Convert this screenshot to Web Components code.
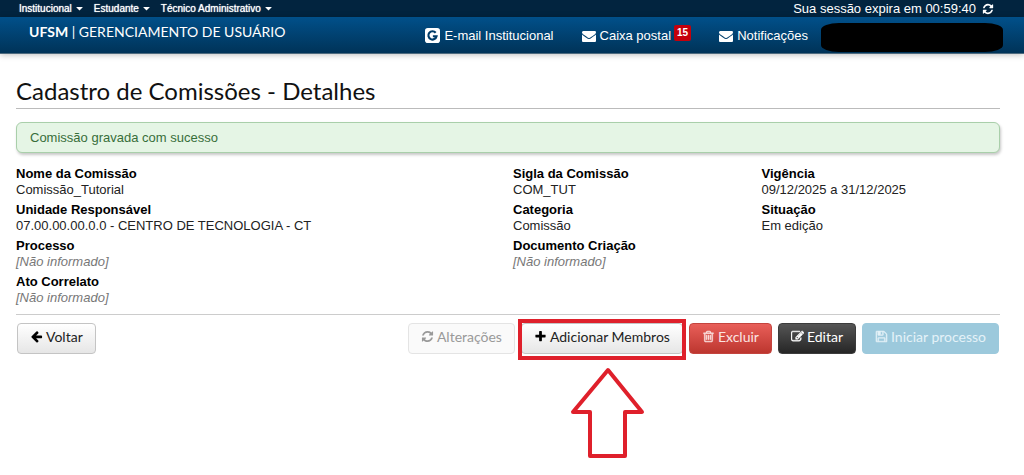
<!DOCTYPE html>
<html lang="pt-BR">
<head>
<meta charset="utf-8">
<title>UFSM | Gerenciamento de Usuário</title>
<style>
  body { margin: 0; background: #fff; color: #111; font: 13px/16px "Liberation Sans", Arial, sans-serif; --display: Lato, Optima, sans-serif; }
</style>
</head>
<body>
<user-app></user-app>
<script>
const ICONS = {
  envelope: 'M1792 710v794q0 66-47 113t-113 47h-1472q-66 0-113-47t-47-113v-794q44 49 101 87 362 246 497 345 57 42 92.5 65.5t94.5 48 110 24.5h2q51 0 110-24.5t94.5-48 92.5-65.5q170-123 498-345 57-39 100-87zm0-294q0 79-49 151t-122 123q-376 261-468 325-10 7-42.5 31t-54 38.5-52 32.5-57.5 27-50 9h-2q-23 0-50-9t-57.5-27-52-32.5-54-38.5-42.5-31q-91-64-262-182.5t-205-142.5q-62-42-117-115.5t-55-136.5q0-78 41.5-130t118.5-52h1472q65 0 112.5 47t47.5 113z',
  refresh: 'M1639 1056q0 5-1 7-64 268-268 434.5t-478 166.5q-146 0-282.5-55t-243.5-157l-129 129q-19 19-45 19t-45-19-19-45v-448q0-26 19-45t45-19h448q26 0 45 19t19 45-19 45l-137 137q71 66 161 102t187 36q134 0 250-65t186-179q11-17 53-117 8-23 30-23h192q13 0 22.5 9.5t9.5 22.5zm25-800v448q0 26-19 45t-45 19h-448q-26 0-45-19t-19-45 19-45l138-138q-148-137-349-137-134 0-250 65t-186 179q-11 17-53 117-8 23-30 23h-199q-13 0-22.5-9.5t-9.5-22.5v-7q65-268 270-434.5t480-166.5q146 0 284 55.5t245 156.5l130-129q19-19 45-19t45 19 19 45z',
  back: 'M1664 896v128q0 53-32.5 90.5t-84.5 37.5h-704l293 294q38 36 38 90t-38 90l-75 76q-37 37-90 37-52 0-91-37l-651-652q-37-37-37-90 0-52 37-91l651-650q38-38 91-38 52 0 90 38l75 74q38 38 38 91t-38 91l-293 293h704q52 0 84.5 37.5t32.5 90.5z',
  plus: 'M1600 736v192q0 40-28 68t-68 28h-416v416q0 40-28 68t-68 28h-192q-40 0-68-28t-28-68v-416h-416q-40 0-68-28t-28-68v-192q0-40 28-68t68-28h416v-416q0-40 28-68t68-28h192q40 0 68 28t28 68v416h416q40 0 68 28t28 68z',
  trash: 'M704 736v576q0 14-9 23t-23 9h-64q-14 0-23-9t-9-23v-576q0-14 9-23t23-9h64q14 0 23 9t9 23zm256 0v576q0 14-9 23t-23 9h-64q-14 0-23-9t-9-23v-576q0-14 9-23t23-9h64q14 0 23 9t9 23zm256 0v576q0 14-9 23t-23 9h-64q-14 0-23-9t-9-23v-576q0-14 9-23t23-9h64q14 0 23 9t9 23zm128 724v-948h-896v948q0 22 7 40.5t14.5 27 10.5 8.5h832q3 0 10.5-8.5t14.5-27 7-40.5zm-672-1076h448l-48-117q-7-9-17-11h-317q-10 2-17 11zm928 32v64q0 14-9 23t-23 9h-96v948q0 83-47 143.5t-113 60.5h-832q-66 0-113-58.5t-47-141.5v-952h-96q-14 0-23-9t-9-23v-64q0-14 9-23t23-9h309l70-167q15-37 54-63t79-26h320q40 0 79 26t54 63l70 167h309q14 0 23 9t9 23z',
  edit: 'M888 1184l116-116-152-152-116 116v56h96v96h56zm440-720q-16-16-33 1l-350 350q-17 17-1 33t33-1l350-350q17-17 1-33zm80 594v190q0 119-84.5 203.5t-203.5 84.5h-832q-119 0-203.5-84.5t-84.5-203.5v-832q0-119 84.5-203.5t203.5-84.5h832q63 0 117 25 15 7 18 23 3 17-9 29l-49 49q-14 14-32 8-23-6-45-6h-832q-66 0-113 47t-47 113v832q0 66 47 113t113 47h832q66 0 113-47t47-113v-126q0-13 9-22l64-64q15-15 35-7t20 29zm-96-738l288 288-672 672h-288v-288zm444 132l-92 92-288-288 92-92q28-28 68-28t68 28l152 152q28 28 28 68t-28 68z',
  save: 'M512 1536h768v-384h-768v384zm896 0h128v-896q0-14-10-38.5t-20-34.5l-281-281q-10-10-34-20t-39-10v416q0 40-28 68t-68 28h-576q-40 0-68-28t-28-68v-416h-128v1280h128v-416q0-40 28-68t68-28h832q40 0 68 28t28 68v416zm-384-928v-320q0-13-9.5-22.5t-22.5-9.5h-192q-13 0-22.5 9.5t-9.5 22.5v320q0 13 9.5 22.5t22.5 9.5h192q13 0 22.5-9.5t9.5-22.5zm640 32v928q0 40-28 68t-68 28h-1344q-40 0-68-28t-28-68v-1344q0-40 28-68t68-28h928q40 0 88 20t76 48l280 280q28 28 48 76t20 88z',
  caret: 'M1408 704q0 26-19 45l-448 448q-19 19-45 19t-45-19l-448-448q-19-19-19-45t19-45 45-19h896q26 0 45 19t19 45z'
};

function define(name, html) {
  const t = document.createElement('template');
  t.innerHTML = html;
  customElements.define(name, class extends HTMLElement {
    constructor() {
      super();
      this.attachShadow({ mode: 'open' }).append(t.content.cloneNode(true));
    }
  });
}

customElements.define('ui-icon', class extends HTMLElement {
  connectedCallback() {
    if (this.shadowRoot) return;
    const name = this.getAttribute('name');
    const heavy = ['trash', 'edit', 'save'].includes(name) ? 'stroke="currentColor" stroke-width="60"' : '';
    const art = name === 'google'
      ? '<svg viewBox="0 0 16 16"><rect width="16" height="16" rx="3" fill="currentColor"/><path d="M11.4 5.1A4.4 4.4 0 1 0 12.3 8.8H8.4" fill="none" stroke="#003c68" stroke-width="2.3"/></svg>'
      : `<svg viewBox="0 0 1792 1792"><path fill="currentColor" ${heavy} d="${ICONS[name]}"/></svg>`;
    this.attachShadow({ mode: 'open' }).innerHTML = `
      <style>
        :host { display: block; flex: none; width: var(--size, 14px); height: var(--size, 14px); }
        svg { display: block; width: 100%; height: 100%; }
      </style>${art}`;
  }
});

define('top-menu', `
  <style>
    :host { display: block; }
    button { display: flex; align-items: center; gap: 2px; padding: 0; border: 0; background: none; color: #fff; font: inherit; font-size: 10px; line-height: 16px; text-shadow: 0 0 1px #fff; }
    ui-icon { --size: 11px; }
  </style>
  <button type="button"><slot></slot><ui-icon name="caret"></ui-icon></button>`);

define('top-bar', `
  <style>
    :host { display: flex; justify-content: space-between; align-items: center; height: 17px; padding: 0 30px 0 19px; background: #02243f; color: #fff; }
    nav { display: flex; gap: 9px; }
    .session { display: flex; align-items: center; gap: 6px; }
    button { display: block; padding: 0; border: 0; background: none; color: inherit; --size: 12px; }
  </style>
  <nav><top-menu>Institucional</top-menu><top-menu>Estudante</top-menu><top-menu>Técnico Administrativo</top-menu></nav>
  <div class="session"><span>Sua sessão expira em 00:59:40</span><button type="button" aria-label="Renovar sessão"><ui-icon name="refresh"></ui-icon></button></div>`);

customElements.define('nav-link', class extends HTMLElement {
  connectedCallback() {
    if (this.shadowRoot) return;
    this.attachShadow({ mode: 'open' }).innerHTML = `
      <style>
        :host { display: block; }
        a { display: flex; align-items: center; gap: 4px; color: #fff; text-decoration: none; }
      </style>
      <a href="#"><ui-icon name="${this.getAttribute('icon')}"></ui-icon><span><slot></slot></span><slot name="badge"></slot></a>`;
  }
});

define('count-badge', `
  <style>
    :host { display: block; margin: -6px 0 0 -1px; padding: 0 3px; background: #c5000b; border-radius: 2px; font-size: 10px; line-height: 16px; font-weight: bold; }
  </style>
  <slot></slot>`);

define('app-header', `
  <style>
    :host { display: flex; justify-content: space-between; height: 36px; padding: 0 21px 0 29px; background: linear-gradient(#01508a, #003358); border-bottom: 1px solid #4d6a7e; box-shadow: 0 1px 6px rgba(0,0,0,.25); color: #fff; }
    .brand { font: 14px/20px var(--display); padding-top: 5px; }
    nav { display: flex; align-items: center; gap: 28px; padding-top: 1px; }
    nav-link:first-child { --size: 15px; }
    .user { width: 182px; height: 29px; margin: 5px 0 0 -15px; align-self: flex-start; background: #000; border-radius: 18px / 7px; }
  </style>
  <div class="brand"><b>UFSM</b> | GERENCIAMENTO DE USUÁRIO</div>
  <nav>
    <nav-link icon="google">E-mail Institucional</nav-link>
    <nav-link icon="envelope">Caixa postal<count-badge slot="badge">15</count-badge></nav-link>
    <nav-link icon="envelope">Notificações</nav-link>
    <div class="user"></div>
  </nav>`);

define('alert-message', `
  <style>
    :host { display: block; margin-top: 13px; padding: 7px 13px 6px; border: 1px solid #a9cfaa; border-radius: 6px; background: #e5f5e5; color: #386e3a; box-shadow: 1px 2px 3px rgba(0,0,0,.22); }
  </style>
  <div role="status"><slot></slot></div>`);

customElements.define('detail-field', class extends HTMLElement {
  connectedCallback() {
    if (this.shadowRoot) return;
    this.attachShadow({ mode: 'open' }).innerHTML = `
      <style>
        :host { display: block; }
        dl, dd { margin: 0; }
        dt { font-weight: bold; color: #000; }
        dd { color: #222; }
        :host([empty]) dd { color: #777; font-style: italic; }
      </style>
      <dl><dt>${this.getAttribute('label')}</dt><dd><slot>[Não informado]</slot></dd></dl>`;
  }
});

customElements.define('action-button', class extends HTMLElement {
  connectedCallback() {
    if (this.shadowRoot) return;
    this.attachShadow({ mode: 'open' }).innerHTML = `
      <style>
        :host { display: block; }
        button { display: flex; align-items: center; gap: 3px; box-sizing: border-box; height: 31px; padding: 0 12px 4px; border: 1px solid #c4c4c4; border-radius: 4px; background: linear-gradient(#fff, #e6e6e6); color: #222; font: 14px/20px var(--display); white-space: nowrap; --size: 13px; }
        ui-icon { color: var(--mark, currentColor); }
        :host([kind=plain]) { --mark: #000; }
        :host([kind=muted]) button { background: #fafafa; border-color: #e4e4e4; color: #999; }
        :host([kind=danger]) button { background: linear-gradient(#e85f59, #bd362f); border-color: #c4443e; color: #fbe4e2; }
        :host([kind=dark]) button { background: linear-gradient(#555, #262626); border-color: #3c3c3c; color: #fff; }
        :host([kind=info]) button { background: #9cc9dc; border-color: #9cc9dc; color: #e4f2f8; }
      </style>
      <button type="button" ${this.hasAttribute('disabled') ? 'disabled' : ''}><ui-icon name="${this.getAttribute('icon')}"></ui-icon><slot></slot></button>`;
  }
});

define('focus-callout', `
  <style>
    :host { display: block; position: relative; }
    .frame { position: absolute; inset: -4px -3px -6px; border: 4px solid #df202b; pointer-events: none; }
    svg { position: absolute; top: 44px; left: 50%; width: 76px; height: 92px; margin-left: -32px; }
  </style>
  <slot></slot><div class="frame"></div>
  <svg viewBox="0 0 76 92"><path d="M38 3 72 45H55V89H20V45H3Z" fill="#fff" stroke="#df202b" stroke-width="4" stroke-linejoin="round"/></svg>`);

define('user-app', `
  <style>
    :host { display: block; min-height: 100vh; }
    main { padding: 24px 24px 112px 16px; }
    h1 { margin: 0; padding-bottom: 4px; border-bottom: 1px solid #bbb; font: 24px/26px var(--display); color: #111; }
    .fields { display: grid; grid-template-columns: 2fr 1fr 1fr; gap: 4px 0; margin: 13px -10px 0 0; }
    .start { grid-column: 1; }
    .actions { display: flex; gap: 6px; margin-top: 8px; padding: 8px 1px 0; border-top: 1px solid #ccc; }
    .actions > :first-child { margin-right: auto; }
  </style>
  <top-bar></top-bar>
  <app-header></app-header>
  <main>
    <h1>Cadastro de Comissões - Detalhes</h1>
    <alert-message>Comissão gravada com sucesso</alert-message>
    <section class="fields">
      <detail-field label="Nome da Comissão">Comissão_Tutorial</detail-field>
      <detail-field label="Sigla da Comissão">COM_TUT</detail-field>
      <detail-field label="Vigência">09/12/2025 a 31/12/2025</detail-field>
      <detail-field label="Unidade Responsável">07.00.00.00.0.0 - CENTRO DE TECNOLOGIA - CT</detail-field>
      <detail-field label="Categoria">Comissão</detail-field>
      <detail-field label="Situação">Em edição</detail-field>
      <detail-field label="Processo" empty></detail-field>
      <detail-field label="Documento Criação" empty></detail-field>
      <detail-field class="start" label="Ato Correlato" empty></detail-field>
    </section>
    <div class="actions">
      <action-button kind="plain" icon="back">Voltar</action-button>
      <action-button kind="muted" icon="refresh" disabled>Alterações</action-button>
      <focus-callout><action-button kind="plain" icon="plus">Adicionar Membros</action-button></focus-callout>
      <action-button kind="danger" icon="trash">Excluir</action-button>
      <action-button kind="dark" icon="edit">Editar</action-button>
      <action-button kind="info" icon="save" disabled>Iniciar processo</action-button>
    </div>
  </main>`);
</script>
</body>
</html>
